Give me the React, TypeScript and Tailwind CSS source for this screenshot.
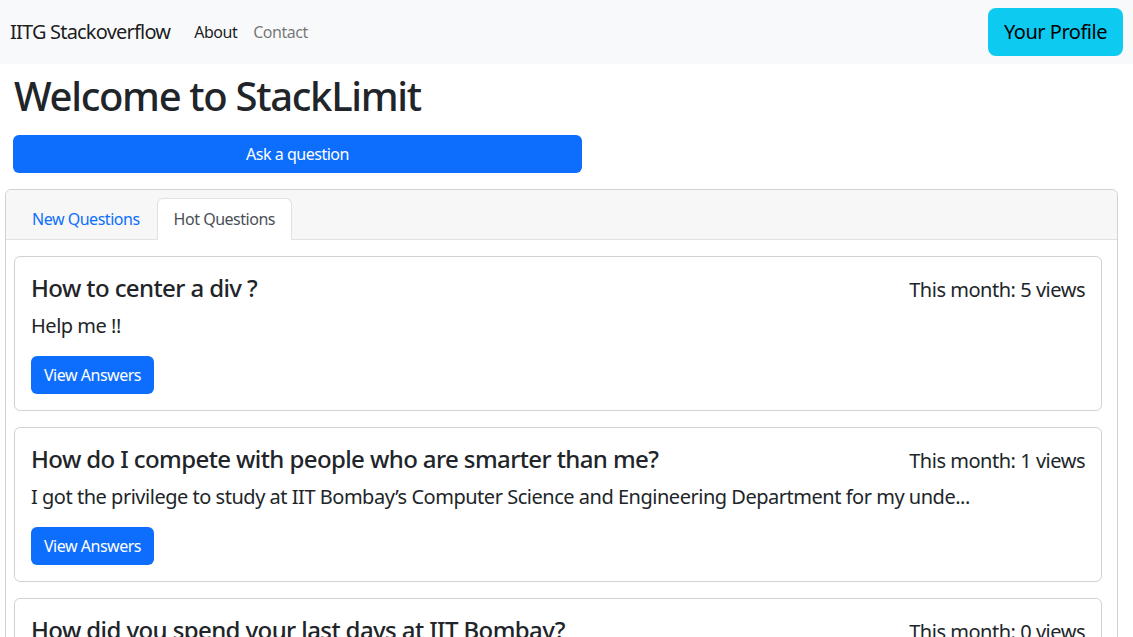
import { useState } from 'react';

const questions = [
    {
        title: 'How to center a div ?',
        body: 'Help me !!',
        views: 5,
    },
    {
        title: 'How do I compete with people who are smarter than me?',
        body: 'I got the privilege to study at IIT Bombay’s Computer Science and Engineering Department for my unde...',
        views: 1,
    },
    {
        title: 'How did you spend your last days at IIT Bombay?',
        body: 'It was the last week of my stay at IIT Bombay and I wanted to make the most of it...',
        views: 0,
    },
];

export default function App() {
    const [tab, setTab] = useState('hot');

    return (
        <div className="min-h-screen bg-white text-[#212529] font-['Noto_Sans',sans-serif] tracking-[-0.03em]">
            <nav className="flex items-center justify-between h-16 bg-[#f8f9fa] px-[10px]">
                <div className="flex items-center">
                    <a className="text-xl text-black/90 mr-4 tracking-[-0.04em]">IITG Stackoverflow</a>
                    <a className="px-2 text-base text-black/90">About</a>
                    <a className="px-2 text-base text-black/55">Contact</a>
                </div>
                <button className="h-12 w-[135px] rounded-lg bg-[#0dcaf0] text-xl text-black">Your Profile</button>
            </nav>

            <div className="px-[14px]">
                <h1 className="text-[40px] leading-[48px] font-medium mt-2 mb-[15px] tracking-[-0.033em]">
                    Welcome to StackLimit
                </h1>
                <button className="w-[569px] h-[38px] -ml-px rounded-md bg-[#0d6efd] text-white text-base">
                    Ask a question
                </button>
            </div>

            <div className="ml-[5px] mt-4 w-[1113px] border border-black/[0.175] rounded-md">
                <div className="bg-[#f7f7f7] border-b border-[#dee2e6] pt-2 pl-[9px] rounded-t-md">
                    <div className="flex -mb-px">
                        <button
                            onClick={() => setTab('new')}
                            className={
                                tab === 'new'
                                    ? 'h-[42px] px-4 bg-white border border-[#dee2e6] border-b-white rounded-t-md text-base text-[#495057]'
                                    : 'h-[42px] px-4 border border-transparent text-base text-[#0d6efd]'
                            }
                        >
                            New Questions
                        </button>
                        <button
                            onClick={() => setTab('hot')}
                            className={
                                tab === 'hot'
                                    ? 'h-[42px] px-4 bg-white border border-[#dee2e6] border-b-white rounded-t-md text-base text-[#495057]'
                                    : 'h-[42px] px-4 border border-transparent text-base text-[#0d6efd]'
                            }
                        >
                            Hot Questions
                        </button>
                    </div>
                </div>
                <div className="pt-4 pl-2 pr-[15px] flex flex-col gap-4">
                    {questions.map((q) => (
                        <div key={q.title} className="border border-black/[0.175] rounded-md p-4">
                            <div className="flex items-baseline justify-between h-[30px]">
                                <h4 className="text-2xl font-medium leading-[30px] tracking-[-0.025em]">{q.title}</h4>
                                <span className="text-xl leading-[30px]">This month: {q.views} views</span>
                            </div>
                            <p className="text-xl leading-[30px] mt-2 mb-[15px]">{q.body}</p>
                            <button className="h-[38px] w-[123px] rounded-md bg-[#0d6efd] text-white text-base">
                                View Answers
                            </button>
                        </div>
                    ))}
                </div>
            </div>
        </div>
    );
}
